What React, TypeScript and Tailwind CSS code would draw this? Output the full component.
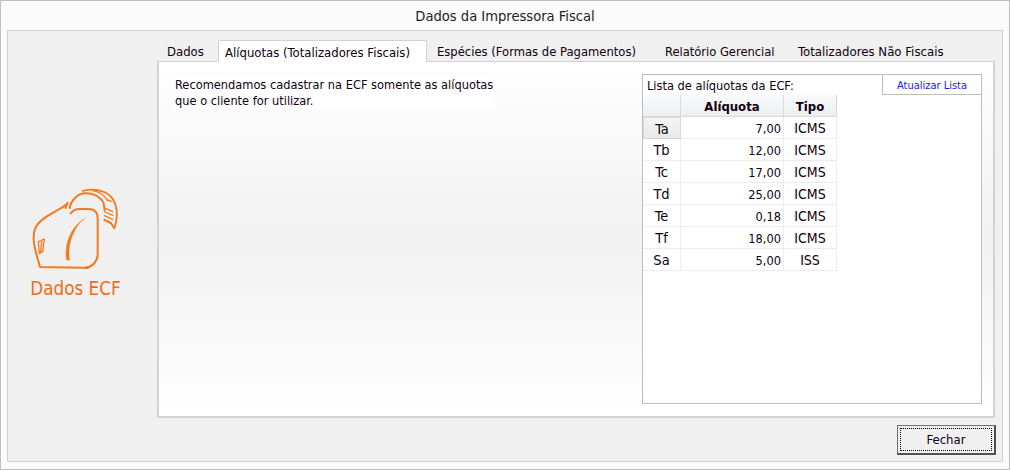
import React from "react";

const rows = [
  ["Ta", "7,00", "ICMS"],
  ["Tb", "12,00", "ICMS"],
  ["Tc", "17,00", "ICMS"],
  ["Td", "25,00", "ICMS"],
  ["Te", "0,18", "ICMS"],
  ["Tf", "18,00", "ICMS"],
  ["Sa", "5,00", "ISS"],
];

function PrinterLogo() {
  return (
    <svg width="110" height="95" viewBox="0 0 330 285" fill="none" stroke="#f47a1f" strokeLinecap="round" strokeLinejoin="round" className="block shrink-0">
      <path d="M138 72 C110 95 60 110 45 140 C35 160 36 180 42 205 C47 230 55 250 57 261 L190 263 C215 262 228 245 230 225 L230 115 C230 98 222 88 205 87 L175 87 C165 87 155 92 149 100" strokeWidth="6" />
      <path d="M140 68 L134 84" strokeWidth="6" />
      <path d="M146 84 C150 60 170 42 190 40 C215 38 240 50 248 70 L251 92" strokeWidth="6" />
      <path d="M185 33 C210 25 250 28 270 50 C290 75 293 105 280 145 L270 130 L250 120" strokeWidth="5.5" />
      <path d="M215 32 C238 36 252 48 258 60" strokeWidth="3.5" />
      <path d="M258 60 L271 64 M254 85 L275 95 M252 96 L276 106 M250 107 L275 118 M250 118 L270 128" strokeWidth="4" />
      <path d="M192 115 C165 130 145 160 137 195 C134 215 134 230 137 240 L146 241 C141 215 145 180 165 145 C172 133 182 122 192 115 Z" fill="#f47a1f" strokeWidth="1" />
      <path d="M52 185 L70 177 L65 215 L55 220 Z M62 185 L59 214" strokeWidth="4" />
      <path d="M190 263 C210 262 225 250 230 225 C226 245 216 258 200 265 Z" fill="#f47a1f" strokeWidth="3" />
    </svg>
  );
}

export default function App() {
  return (
    <div className="w-[1010px] h-[470px] overflow-hidden border border-[#bfbfbf] bg-[#fbfbfb] px-[6px] pb-[7px] flex flex-col text-[13px] text-[#100010] [font-family:'DejaVu_Sans_Condensed','DejaVu_Sans',sans-serif]">
      <div className="h-[29px] shrink-0 flex items-center justify-center text-[14.6px] text-[#222]">
        Dados da Impressora Fiscal
      </div>
      <div className="flex-1 min-h-0 border border-[#cfcfcf] bg-[#f0f0f0] flex pr-[7px] pt-[8px] pb-[6px]">
        <div className="w-[149px] shrink-0 flex flex-col items-center pt-[141px] pr-[14px]">
          <PrinterLogo />
          <div className="mt-[3px] text-[18.7px] leading-[22px] text-[#ef6c14]">Dados ECF</div>
        </div>
        <div className="flex-1 min-w-0 flex flex-col">
          <div className="h-[22px] shrink-0 flex items-end relative z-10 pl-[10px]">
            <div className="w-[51px] h-[21px] leading-[23px]">Dados</div>
            <div className="w-[209px] h-[22px] leading-[23px] bg-white border border-b-0 border-[#c9d3d8] rounded-t-[2px] pl-[6px] mb-[-1px]">Alíquotas (Totalizadores Fiscais)</div>
            <div className="w-[238px] h-[21px] leading-[23px] pl-[10px] text-[12.9px]">Espécies (Formas de Pagamentos)</div>
            <div className="w-[133px] h-[21px] leading-[23px] text-[12.8px]">Relatório Gerencial</div>
            <div className="h-[21px] leading-[23px] text-[13.1px]">Totalizadores Não Fiscais</div>
          </div>
          <div className="flex-1 min-h-0 border-2 border-t border-[#d2d2d2] bg-gradient-to-b from-white via-[#f1f1f1] to-white flex pt-[12px] pr-[11px] pb-[12px] pl-[16px]">
            <div className="w-[467px] shrink-0 text-[12.7px] leading-[16px] pt-[3px]">
              <div className="bg-white w-[318px] whitespace-nowrap">
                Recomendamos cadastrar na ECF somente as alíquotas<br />que o cliente for utilizar.
              </div>
            </div>
            <div className="flex-1 min-w-0 border border-[#bdbdbd] bg-white flex flex-col">
              <div className="h-[20px] shrink-0 flex justify-between items-start">
                <div className="pl-[4px] text-[12.7px] leading-[21px]">Lista de alíquotas da ECF:</div>
                <div className="w-[99px] h-[20px] border-l border-b border-[#bdbdbd] text-center text-[11px] leading-[21px] text-[#1a1ae6]">Atualizar Lista</div>
              </div>
              <div className="w-[194px] grid grid-cols-[38px_103px_53px]">
                <div className="h-[22px] bg-gradient-to-b from-[#f9fafb] to-[#eceef0] border-r border-b border-[#d8d8d8]" />
                <div className="h-[22px] bg-gradient-to-b from-[#f9fafb] to-[#eceef0] border-r border-b border-[#d8d8d8] text-center font-bold leading-[23px]">Alíquota</div>
                <div className="h-[22px] bg-gradient-to-b from-[#f9fafb] to-[#eceef0] border-r border-b border-[#d8d8d8] text-center font-bold leading-[23px]">Tipo</div>
                {rows.map((r, i) => (
                  <React.Fragment key={r[0]}>
                    <div className={i === 0 ? "h-[22px] border border-[#d8d8d8] bg-gradient-to-b from-[#f4f4f4] to-[#e8e8e8] text-center text-[14.5px] leading-[22px]" : "h-[22px] border-r border-b border-[#ececec] text-center text-[14.5px] leading-[23px]"}>{r[0]}</div>
                    <div className="h-[22px] border-r border-b border-[#ececec] text-right text-[12.7px] pr-[2px] leading-[23px]">{r[1]}</div>
                    <div className="h-[22px] border-r border-b border-[#ececec] text-center text-[14px] leading-[23px]">{r[2]}</div>
                  </React.Fragment>
                ))}
              </div>
            </div>
          </div>
          <div className="h-[37px] shrink-0 flex justify-end items-end mr-[-1px]">
            <button className="w-[99px] h-[30px] border border-[#707070] border-r-2 border-b-2 border-r-[#505050] border-b-[#505050] bg-[#f0f0f0] p-[2px]">
              <div className="w-full h-full border border-dotted border-black flex items-center justify-center leading-[23px]">Fechar</div>
            </button>
          </div>
        </div>
      </div>
    </div>
  );
}
